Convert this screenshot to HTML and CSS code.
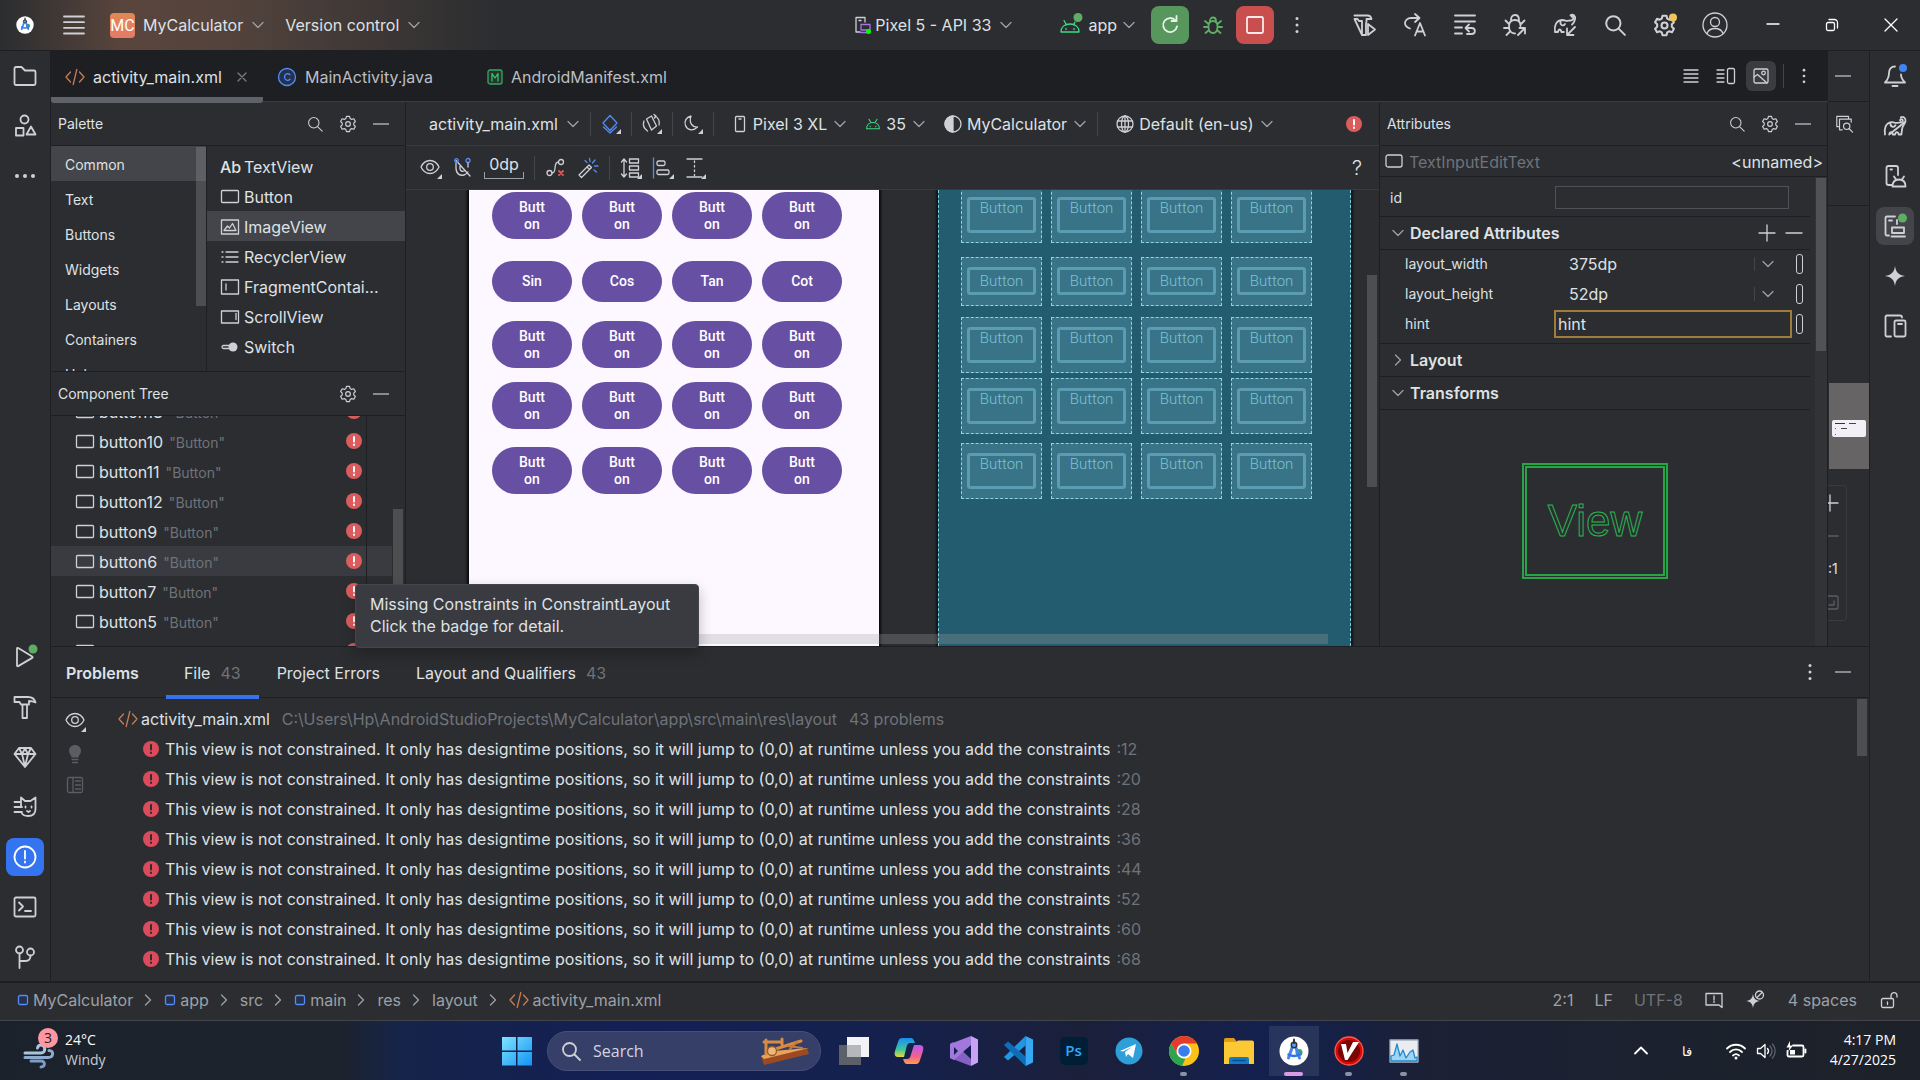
FILE: index.html
```html
<!DOCTYPE html>
<html lang="en">
<head>
<meta charset="utf-8">
<title>MyCalculator – activity_main.xml</title>
<link rel="stylesheet" href="styles.css">
</head>
<body>
<svg class="defs" aria-hidden="true">
  <symbol id="chev" viewBox="0 0 14 14"><path d="M2 4.500l5 5 5-5"/></symbol>
  <symbol id="chev-r" viewBox="0 0 14 14"><path d="M4.500 2l5 5-5 5"/></symbol>
  <symbol id="minus" viewBox="0 0 16 16"><path d="M0 8h16" stroke-width="2"/></symbol>
  <symbol id="kebab" viewBox="0 0 20 20"><g fill="currentColor" stroke="none"><circle cx="10" cy="3.500" r="1.500"/><circle cx="10" cy="10" r="1.500"/><circle cx="10" cy="16.500" r="1.500"/></g></symbol>
  <symbol id="search" viewBox="0 0 20 20"><circle cx="8.500" cy="8.500" r="6.500"/><path d="M13.500 13.500L19 19"/></symbol>
  <symbol id="gear" viewBox="0 0 20 20"><path d="M8.300 1.500h3.400l.7 2.500 1.600.9 2.500-.7 1.700 3-1.800 1.800v2l1.800 1.800-1.700 3-2.500-.7-1.600.9-.7 2.500H8.300L7.600 16 6 15.100l-2.500.7-1.700-3L3.600 11V9L1.800 7.200l1.700-3L6 4.900 7.600 4z"/><circle cx="10" cy="10" r="2.600"/></symbol>
  <symbol id="xml" viewBox="0 0 20 20"><g stroke="#c77d55"><path d="M5.500 5L1 10l4.500 5M14.500 5l4.500 5-4.500 5M11.800 2.500l-3.600 15"/></g></symbol>
  <symbol id="err" viewBox="0 0 16 16"><circle cx="8" cy="8" r="8" fill="#db5c5c" stroke="none"/><path d="M8 4v4.500" stroke="#fff" stroke-width="2"/><path d="M8 11.500v.5" stroke="#fff" stroke-width="2"/></symbol>
  <symbol id="err2" viewBox="0 0 16 16"><circle cx="8" cy="8" r="8" fill="#db4b5b" stroke="none"/><path d="M8 4v4.500" stroke="#2b2d30" stroke-width="2"/><path d="M8 11.500v.5" stroke="#2b2d30" stroke-width="2"/></symbol>
  <symbol id="rect" viewBox="0 0 20 16"><rect x="1.500" y="1.500" width="17" height="12" rx="1"/></symbol>
  <symbol id="droid" viewBox="0 0 20 20"><path d="M2 16c0-5 3.500-8 8-8s8 3 8 8zM5 4l2.500 4.500M15 4l-2.500 4.500"/><path d="M6.500 12.500v1M13.500 12.500v1"/></symbol>
  <symbol id="corner" viewBox="0 0 5 5"><path d="M5 0v5H0z" fill="#ced0d6" stroke="none"/></symbol>
  <symbol id="eye" viewBox="0 0 20 20"><path d="M1 10c2-4.300 5.200-6.500 9-6.500s7 2.200 9 6.500c-2 4.300-5.200 6.500-9 6.500S3 14.300 1 10z"/><circle cx="10" cy="10" r="3.300"/></symbol>
  <symbol id="module" viewBox="0 0 12 12"><rect x="1.500" y="1.500" width="9" height="9" rx="1.500" fill="#25324d" stroke="#548af7"/></symbol>
  <symbol id="elephant" viewBox="0 0 24 24"><path d="M2 20.500C1 14.500 2.500 9 8.500 8.200c2-.2 3 .6 4.500.6 2.500 0 5.500.2 6.500-1.300.8-1.400-.2-2.600-1.400-2.400-.9.200-1.200 1-.8 1.700M22.500 7.500c.6-3.500-2.300-5.500-4.700-4.200M22.500 7.500c-1 3.200-2.700 4-3.200 6.500-.4 2.200-.6 4.200-.9 6.500h-2.700c-.3-1.500-.8-2.300-1.800-2.300s-1.500.8-1.800 2.300H9.800c-.3-1.500-.8-2.300-1.800-2.300s-1.500.8-1.800 2.300zM7.500 9c-.5 4 3.500 5 5 2.300M17 12v.3"/></symbol>
  <symbol id="aslogo" viewBox="0 0 30 30"><circle cx="15" cy="15" r="14.500" fill="#fff" stroke="none"/><circle cx="20" cy="16.500" r="3.500" fill="#38a169" stroke="none"/><path d="M14 9L9.500 22M16 9l4.500 13" stroke="#4285f4" stroke-width="3"/><path d="M9.500 18.500c3.500 2 7.500 2 11 0" stroke="#3372e8" stroke-width="2.500"/><circle cx="15" cy="9" r="2.700" fill="#5b9bff" stroke="#333" stroke-width="1.500"/><path d="M15 3.500V7" stroke="#333" stroke-width="2"/></symbol>
</svg>

<header class="titlebar">
  <span class="logo"><svg class="i18"><use href="#aslogo"/></svg></span>
  <button class="slot-menu" aria-label="Main menu"><svg viewBox="0 0 20 20" class="i20 thick"><path d="M0 1.500h20M0 7.200h20M0 12.800h20M0 18.500h20"/></svg></button>
  <button class="combo project"><span class="mc">MC</span><span>MyCalculator</span><svg class="i14"><use href="#chev"/></svg></button>
  <button class="combo vcs">Version control<svg class="i14"><use href="#chev"/></svg></button>
  <div class="run">
    <button class="combo tight"><svg class="i18" viewBox="0 0 18 18"><path d="M6 16H2V1.500h9V6M5 4.500h2"/><path d="M7 8.500h9V14H7zM6 16.500h8" stroke="#a571e6"/><circle cx="14.500" cy="15.500" r="2.500" fill="#0f0" stroke="none"/></svg><span>Pixel 5 - API 33</span><svg class="i14 gap5"><use href="#chev"/></svg></button>
    <button class="combo app"><svg class="i24" viewBox="0 0 24 24"><g stroke="#3ddc84" transform="translate(0 4)"><path d="M2 15c0-5 3.500-8 9-8s9 3 9 8zM5 3.500L7.500 8M16 5l-1.500 3M7 11.500v1M15 11.500v1"/></g><circle cx="19" cy="4.500" r="4.500" fill="#5fad65" stroke="none"/></svg><span>app</span><svg class="i14"><use href="#chev"/></svg></button>
    <button class="act green" aria-label="Rerun"><svg class="i20 thick" viewBox="0 0 20 20"><path d="M15.500 5.500A7 7 0 1 0 17 11.500M16.500 1v5h-5" stroke="#e8f3e8"/></svg></button>
    <button class="act bug" aria-label="Debug"><svg class="i20 thick" viewBox="0 0 20 20"><g stroke="#5fad65"><path d="M10 6c3 0 4.500 2 4.500 5.500S13 18 10 18s-4.500-3-4.500-6.500S7 6 10 6zM7 6c0-2.500 1.300-3.500 3-3.500S13 3.500 13 6M5.500 9L2 6M14.500 9L18 6M5.500 12H1M14.500 12H19M6 15l-3.500 3M14 15l3.500 3"/></g></svg></button>
    <button class="act red" aria-label="Stop"><svg class="i20 thick" viewBox="0 0 20 20"><rect x="2" y="2" width="16" height="16" rx="1.500" stroke="#fbeaea"/></svg></button>
    <button class="act kb" aria-label="More"><svg class="i20"><use href="#kebab"/></svg></button>
  </div>
  <nav class="tools">
    <button aria-label="Build"><svg class="i24 thick" viewBox="0 0 24 24"><path d="M1.500 2.500h13c2 0 3.500 1 4 3.500h-5v3M9 22H13V10M9 22V8H6L4.500 6h-3zM15 11l7 5.500-7 5.500z"/></svg></button>
    <button aria-label="Apply changes"><svg class="i24 thick" viewBox="0 0 24 24"><path d="M7 15.500C4 14.500 2 12.500 2 10s2.500-5 6-5h8M12 1l4.500 4L12 9M12 22.500L17 10l5 12.500M13.500 18.500h7"/></svg></button>
    <button aria-label="Apply code"><svg class="i24 thick" viewBox="0 0 24 24"><path d="M2 2.500h20M2 8.500h20M2 14.500h7M2 20.500h7M13 15h5.500c4.500 0 4.500 6 0 6H14M16 11.500L12.500 15l3.500 3.500"/></svg></button>
    <button aria-label="Attach debugger"><svg class="i24 thick" viewBox="0 0 24 24"><path d="M12 20.500c-4 0-6-3-6-7 0-4 2-6.500 6-6.500s5.500 2.500 5.500 6M8 7c0-3 1.500-5 4-5s4 2 4 5M6 11L2.500 7.500M6 15H1M7 18.500L3.500 22M18 11l3.500-3.500M15 22l7-7M16.500 15H22v5.500"/></svg></button>
    <button aria-label="Sync Gradle"><svg class="i24 thick" viewBox="0 0 24 24"><path d="M2 19c-1-6 1-11.500 7-12 3 0 4 1 5.500.8 1.500-.2 4.500.2 5.500-1.500.8-1.500-.2-3-1.500-2.800M22 6.500C23 3 20 .8 17.500 2.300M22 6.500c-.8 3-2 4-3 5M2 19h3c.3-1.500.7-2.500 1.700-2.500S8.100 17.500 8.400 19h2.500M7.500 9c-.5 3.500 3 4.500 4.500 2M22 14l-7.500 7.500M14 15.500V22h6.500"/></svg></button>
    <button aria-label="Search"><svg class="i22 thick"><use href="#search"/></svg></button>
    <button aria-label="Settings"><svg class="i24 thick" viewBox="0 0 24 24"><use href="#gear" x="0" y="1" width="23" height="23"/><circle cx="20" cy="4.500" r="4" fill="#f2c55c" stroke="none"/></svg></button>
    <button aria-label="Account"><svg class="i26" viewBox="0 0 26 26"><circle cx="13" cy="13" r="12"/><circle cx="13" cy="10" r="4.500"/><path d="M5 21.500c1.500-4 5-5 8-5s6.500 1 8 5"/></svg></button>
  </nav>
  <div class="win">
    <button aria-label="Minimize"><svg class="i14 white" viewBox="0 0 14 14"><path d="M1 6h12"/></svg></button>
    <button aria-label="Restore"><svg class="i14 white" viewBox="0 0 14 14"><rect x="1.500" y="4.500" width="8" height="8" rx="1.500"/><path d="M4 1.500h5.500a3 3 0 0 1 3 3V10"/></svg></button>
    <button aria-label="Close"><svg class="i14 white" viewBox="0 0 14 14"><path d="M1 1l12 12M13 1L1 13"/></svg></button>
  </div>
</header>

<div class="workbench">
  <nav class="strip left">
    <button aria-label="Project"><svg class="i24 thick" viewBox="0 0 24 24"><path d="M1.500 19V4.500c0-1 .5-1.500 1.500-1.500h5.500l3.500 3.500h9c1 0 1.500.5 1.500 1.500v11.500c0 1-.5 1.500-1.500 1.500H3c-1 0-1.500-.5-1.500-1.500z"/></svg></button>
    <button aria-label="Resource Manager"><svg class="i24 thick" viewBox="0 0 24 24"><circle cx="11.500" cy="5.500" r="4"/><rect x="3" y="14" width="7.500" height="7.500"/><path d="M18 12.500l4.500 8h-9z"/></svg></button>
    <button aria-label="More tool windows"><svg class="i24" viewBox="0 0 24 24"><g fill="#ced0d6" stroke="none"><circle cx="4" cy="12" r="2"/><circle cx="12" cy="12" r="2"/><circle cx="20" cy="12" r="2"/></g></svg></button>
    <span class="push"></span>
    <button aria-label="Run"><svg class="i24 thick" viewBox="0 0 24 24"><path d="M4 3.500v17c0 .8.6 1 1.200.6l14-8.200c.6-.4.600-1 0-1.400L5.200 3C4.600 2.600 4 2.800 4 3.500z"/><circle cx="20" cy="4" r="4.500" fill="#5fad65" stroke="none"/></svg></button>
    <button aria-label="Build"><svg class="i24 thick" viewBox="0 0 24 24"><path d="M1.500 2H15c3.500 0 6.500 1.500 7.500 5.500-2-1-4-1.500-6.500-1.500v3.500H8L6.500 7h-5zM9.500 9.500V23h4.500V9.500"/></svg></button>
    <button aria-label="App Quality Insights"><svg class="i24 thick" viewBox="0 0 24 24"><path d="M6 3h12l4.500 6L12 22 1.500 9zM1.500 9h21M6 3l3 6 3 12.500L15 9l3-6M9 9l3-5.500L15 9"/></svg></button>
    <button aria-label="Logcat"><svg class="i24 thick" viewBox="0 0 24 24"><path d="M8 12V2.500L12 6h5.500L22.500 2.500V14c0 4-2.500 7-7.500 7s-6-2-6.500-3.500M1.500 7H8M1.500 12H9M1.500 17H9M12.500 11.500v1M18.500 11.500v1M14 16l1.500 1 1.500-1"/></svg></button>
    <button class="on blue" aria-label="Problems"><svg class="i24 thick white" viewBox="0 0 24 24"><circle cx="12" cy="12" r="10.500"/><path d="M12 6v7.500M12 16.500v1"/></svg></button>
    <button aria-label="Terminal"><svg class="i24 thick" viewBox="0 0 24 24"><rect x="1.500" y="2.500" width="21" height="19" rx="1.500"/><path d="M6 7.500l4 4-4 4M12 16h6"/></svg></button>
    <button aria-label="Version Control"><svg class="i24 thick" viewBox="0 0 24 24"><circle cx="6.500" cy="5" r="3.500"/><circle cx="17.500" cy="7" r="3.500"/><path d="M6.500 8.500V23M17.500 10.500c0 4-2 5.500-5 5.500h-6"/></svg></button>
  </nav>

  <div class="center">
    <div class="upper">
      <main class="editor">
        <div class="tabs">
          <a class="tab on" href="#"><svg class="i20"><use href="#xml"/></svg>activity_main.xml<svg class="i10" viewBox="0 0 10 10"><path d="M1 1l8 8M9 1L1 9" stroke="#7a7c82"/></svg></a>
          <a class="tab" href="#"><svg class="i20" viewBox="0 0 20 20"><circle cx="10" cy="10" r="8.500" fill="#25324d" stroke="#548af7"/><path d="M13 7.700c-2-2.200-5.500-1-5.500 2.300s3.500 4.500 5.500 2.300" stroke="#548af7"/></svg>MainActivity.java</a>
          <a class="tab third" href="#"><svg class="i16" viewBox="0 0 16 16"><rect x="1" y="1" width="14" height="14" rx="2" fill="#253627" stroke="#35a86b"/><path d="M5 12V4.500l3 4.500 3-4.500V12" stroke="#35c27a"/></svg>AndroidManifest.xml</a>
          <div class="views">
            <button aria-label="Code"><svg class="i16" viewBox="0 0 16 16"><path d="M1 2h14M1 6h14M1 10h14M1 14h14"/></svg></button>
            <button aria-label="Split"><svg class="i20" viewBox="0 0 20 20"><path d="M1 4h7M1 8h7M1 12h7M1 16h7"/><rect x="11.500" y="2.500" width="7" height="15" rx="1.500"/></svg></button>
            <button class="sel" aria-label="Design"><svg class="i16" viewBox="0 0 16 16"><rect x="1" y="1" width="14" height="14" rx="1.500"/><circle cx="10.500" cy="5" r="1.800"/><path d="M1 9l3.500-2.500 9.500 8.500"/></svg></button>
            <i class="sep"></i>
            <button aria-label="More"><svg class="i18"><use href="#kebab"/></svg></button>
          </div>
        </div>

        <div class="design">
          <aside class="side">
            <section class="palette">
              <h2 class="head">Palette<span class="acts"><button aria-label="Search"><svg class="i16"><use href="#search"/></svg></button><button aria-label="Settings"><svg class="i18"><use href="#gear"/></svg></button><button aria-label="Hide"><svg class="i16 dim"><use href="#minus"/></svg></button></span></h2>
              <div class="pal-body">
                <ul class="cats">
                  <li class="sel">Common</li><li>Text</li><li>Buttons</li><li>Widgets</li><li>Layouts</li><li>Containers</li><li>Helpers</li>
                </ul>
                <i class="thumb cats-thumb"></i>
                <ul class="items">
                  <li><b>Ab</b>TextView</li>
                  <li><svg class="rc"><use href="#rect"/></svg>Button</li>
                  <li class="sel"><svg class="rc" viewBox="0 0 20 16"><rect x="1.500" y="1" width="17" height="14"/><path d="M4 11.500L7.500 7l2 2 3-4.500 3.500 7z"/></svg>ImageView</li>
                  <li><svg class="rc" viewBox="0 0 20 16"><path d="M6 3h12M6 8h12M6 13h12M2 3h1M2 8h1M2 13h1"/></svg>RecyclerView</li>
                  <li><svg class="rc" viewBox="0 0 20 16"><rect x="1.500" y="1" width="17" height="14"/><path d="M6 5v6"/></svg>FragmentContai...</li>
                  <li><svg class="rc" viewBox="0 0 20 16"><rect x="1.500" y="2" width="17" height="12"/><path d="M16 4.500v6"/></svg>ScrollView</li>
                  <li><svg class="rc" viewBox="0 0 20 16"><rect x="2" y="6.500" width="12" height="3" rx="1.500"/><circle cx="13" cy="8" r="4.500" fill="#ced0d6" stroke="none"/></svg>Switch</li>
                </ul>
              </div>
            </section>
            <section class="ctree">
              <h2 class="head">Component Tree<span class="acts"><button aria-label="Settings"><svg class="i18"><use href="#gear"/></svg></button><button aria-label="Hide"><svg class="i16 dim"><use href="#minus"/></svg></button></span></h2>
              <div class="ct-body">
                <ul class="ct-list">
                  <li><svg class="rc"><use href="#rect"/></svg>button18<small>"Button"</small><svg class="i16 badge"><use href="#err"/></svg></li>
                  <li><svg class="rc"><use href="#rect"/></svg>button10<small>"Button"</small><svg class="i16 badge"><use href="#err"/></svg></li>
                  <li><svg class="rc"><use href="#rect"/></svg>button11<small>"Button"</small><svg class="i16 badge"><use href="#err"/></svg></li>
                  <li><svg class="rc"><use href="#rect"/></svg>button12<small>"Button"</small><svg class="i16 badge"><use href="#err"/></svg></li>
                  <li><svg class="rc"><use href="#rect"/></svg>button9<small>"Button"</small><svg class="i16 badge"><use href="#err"/></svg></li>
                  <li class="sel"><svg class="rc"><use href="#rect"/></svg>button6<small>"Button"</small><svg class="i16 badge"><use href="#err"/></svg></li>
                  <li><svg class="rc"><use href="#rect"/></svg>button7<small>"Button"</small><svg class="i16 badge"><use href="#err"/></svg></li>
                  <li><svg class="rc"><use href="#rect"/></svg>button5<small>"Button"</small><svg class="i16 badge"><use href="#err"/></svg></li>
                  <li><svg class="rc"><use href="#rect"/></svg>button8<small>"Button"</small><svg class="i16 badge"><use href="#err"/></svg></li>
                </ul>
                <i class="thumb ct-thumb"></i>
              </div>
              <div class="tooltip" role="tooltip">Missing Constraints in ConstraintLayout<br>Click the badge for detail.</div>
            </section>
          </aside>

          <section class="canvas">
            <div class="bar one">
              <button class="combo">activity_main.xml<svg class="i14"><use href="#chev"/></svg></button>
              <i class="sep"></i>
              <button class="ic" aria-label="Surface"><svg class="i20" viewBox="0 0 20 20"><path d="M9 1.500L16 9l-7 7.500L2 9zM2.500 13L9 19l6.500-6" stroke="#548af7"/><use href="#corner" x="15" y="15" width="5" height="5"/></svg></button>
              <i class="sep"></i>
              <button class="ic" aria-label="Orientation"><svg class="i20" viewBox="0 0 20 20"><path d="M4.500 5l5-3 5 10-5 4zM2 7C.5 11 2 14.500 5.500 17M13 2c3.500 1.500 5 5.500 4 9M12 .5l2 1.500-1.500 2"/><use href="#corner" x="15" y="15" width="5" height="5"/></svg></button>
              <i class="sep"></i>
              <button class="ic" aria-label="Night mode"><svg class="i20" viewBox="0 0 20 20"><path d="M8 2C3 3 1 7.500 2.500 11.500S9.500 18 14.500 13C10 13.500 5.500 9.500 8 2z"/><use href="#corner" x="15" y="15" width="5" height="5"/></svg></button>
              <i class="sep"></i>
              <button class="combo pad"><svg class="i16" viewBox="0 0 16 16"><rect x="3.500" y=".5" width="9" height="15" rx="1"/><path d="M7 3h2"/></svg>Pixel 3 XL<svg class="i14"><use href="#chev"/></svg></button>
              <button class="combo pad"><svg class="i16 lime"><use href="#droid"/></svg>35<svg class="i14"><use href="#chev"/></svg></button>
              <button class="combo pad"><svg class="i18" viewBox="0 0 18 18"><circle cx="9" cy="9" r="8"/><path d="M9 1a8 8 0 0 0 0 16z" fill="#ced0d6"/></svg>MyCalculator<svg class="i14"><use href="#chev"/></svg></button>
              <i class="sep"></i>
              <button class="combo pad"><svg class="i18" viewBox="0 0 18 18"><circle cx="9" cy="9" r="8"/><ellipse cx="9" cy="9" rx="3.500" ry="8"/><path d="M9 1v16M1.500 6h15M1.500 12h15"/></svg>Default (en-us)<svg class="i14"><use href="#chev"/></svg></button>
              <button class="end" aria-label="Errors"><svg class="i16"><use href="#err"/></svg></button>
            </div>
            <div class="bar two">
              <button class="ic" aria-label="View options"><svg class="i22" viewBox="0 0 22 22"><use href="#eye" width="20" height="20"/><use href="#corner" x="17" y="17" width="5" height="5"/></svg></button>
              <button class="ic" aria-label="Autoconnect"><svg class="i22" viewBox="0 0 22 22"><path d="M4 6v5c0 6 4 8 8 7 2-.5 3-1.500 4-3M8 9.500v2c0 2 2 3.500 4 2.500M4 3.500L18 19"/><circle cx="4.500" cy="3.500" r="1.800" stroke="#548af7"/><circle cx="16" cy="3.500" r="2" stroke="#548af7"/><path d="M16 6v4"/></svg></button>
              <button class="dp">0dp</button>
              <i class="sep"></i>
              <button class="ic" aria-label="Clear constraints"><svg class="i22" viewBox="0 0 22 22"><circle cx="16" cy="5" r="2.500"/><circle cx="4.500" cy="16" r="2.500"/><path d="M13.500 5c-6 0-1 11-6.500 11"/><path d="M14 14l4 4M18 14l-4 4" stroke="#db5c5c" stroke-width="1.800"/></svg></button>
              <button class="ic" aria-label="Infer constraints"><svg class="i22" viewBox="0 0 22 22"><path d="M2 18L12 8l2.500 2.500L4.500 20.500zM10 10l2.500 2.500"/><path d="M12.500 1.500l.5 3M18 3l-2.500 3M21 9h-3.500M19.500 15l-2.500-2M8 3.500l2 2" stroke="#548af7"/></svg></button>
              <i class="sep"></i>
              <button class="ic" aria-label="Pack"><svg class="i22" viewBox="0 0 22 22"><path d="M4 2v18M1.500 5L4 2l2.500 3M1.500 17L4 20l2.500-3"/><rect x="9.500" y="2" width="9" height="4"/><rect x="9.500" y="9" width="9" height="4"/><rect x="9.500" y="16" width="9" height="4"/><use href="#corner" x="17" y="17" width="5" height="5"/></svg></button>
              <button class="ic" aria-label="Align"><svg class="i22" viewBox="0 0 22 22"><path d="M1.500 1v20" stroke="#548af7"/><rect x="5" y="4" width="8" height="4.500" rx="1.500"/><rect x="5" y="13" width="12" height="4.500" rx="1.500"/><use href="#corner" x="17" y="17" width="5" height="5"/></svg></button>
              <button class="ic" aria-label="Guidelines"><svg class="i22" viewBox="0 0 22 22"><path d="M3 2h15M3 20h15"/><path d="M10.500 4v15" stroke-dasharray="1.500 3"/><use href="#corner" x="17" y="17" width="5" height="5"/></svg></button>
              <button class="end help">?</button>
            </div>
            <div class="surface">
              <div class="phone">
                <div class="prow r1"><button>Butt<br>on</button><button>Butt<br>on</button><button>Butt<br>on</button><button>Butt<br>on</button></div>
                <div class="prow r2"><button>Sin</button><button>Cos</button><button>Tan</button><button>Cot</button></div>
                <div class="prow r3"><button>Butt<br>on</button><button>Butt<br>on</button><button>Butt<br>on</button><button>Butt<br>on</button></div>
                <div class="prow r4"><button>Butt<br>on</button><button>Butt<br>on</button><button>Butt<br>on</button><button>Butt<br>on</button></div>
                <div class="prow r5"><button>Butt<br>on</button><button>Butt<br>on</button><button>Butt<br>on</button><button>Butt<br>on</button></div>
              </div>
              <div class="blueprint">
                <div class="brow b1"><div><span>Button</span></div><div><span>Button</span></div><div><span>Button</span></div><div><span>Button</span></div></div>
                <div class="brow b2"><div><span>Button</span></div><div><span>Button</span></div><div><span>Button</span></div><div><span>Button</span></div></div>
                <div class="brow b3"><div><span>Button</span></div><div><span>Button</span></div><div><span>Button</span></div><div><span>Button</span></div></div>
                <div class="brow b4"><div><span>Button</span></div><div><span>Button</span></div><div><span>Button</span></div><div><span>Button</span></div></div>
                <div class="brow b5"><div><span>Button</span></div><div><span>Button</span></div><div><span>Button</span></div><div><span>Button</span></div></div>
              </div>
              <i class="thumb sv"></i><i class="thumb sh"></i>
            </div>
          </section>

          <aside class="attrs">
            <h2 class="head">Attributes<span class="acts"><button aria-label="Search"><svg class="i16"><use href="#search"/></svg></button><button aria-label="Settings"><svg class="i18"><use href="#gear"/></svg></button><button aria-label="Hide"><svg class="i16 dim"><use href="#minus"/></svg></button></span></h2>
            <div class="kind"><svg class="i18" viewBox="0 0 18 18"><rect x="1" y="2" width="16" height="12" rx="2"/></svg><span>TextInputEditText</span><em>&lt;unnamed&gt;</em></div>
            <div class="at-body">
              <div class="at-main">
                <div class="arow idrow"><label for="a-id">id</label><input id="a-id" class="idbox" type="text"></div>
                <h3 class="ahead"><svg class="i14"><use href="#chev"/></svg>Declared Attributes<span class="pm"><button aria-label="Add"><svg class="i16" viewBox="0 0 16 16"><path d="M8 0v16M0 8h16"/></svg></button><button aria-label="Remove"><svg class="i16" viewBox="0 0 16 16"><path d="M0 8h16"/></svg></button></span></h3>
                <div class="decl">
                  <div class="arow"><label for="a-w">layout_width</label><span class="cb"><select id="a-w"><option>375dp</option></select><i class="sep"></i><svg class="i14"><use href="#chev"/></svg></span><i class="pill"></i></div>
                  <div class="arow"><label for="a-h">layout_height</label><span class="cb"><select id="a-h"><option>52dp</option></select><i class="sep"></i><svg class="i14"><use href="#chev"/></svg></span><i class="pill"></i></div>
                  <div class="arow"><label for="a-hint">hint</label><input id="a-hint" class="hint" type="text" value="hint"><i class="pill"></i></div>
                </div>
                <h3 class="ahead"><svg class="i14"><use href="#chev-r"/></svg>Layout</h3>
                <h3 class="ahead"><svg class="i14"><use href="#chev"/></svg>Transforms</h3>
                <div class="viewbox"><span>View</span></div>
              </div>
              <div class="track"><i class="thumb"></i></div>
            </div>
          </aside>
        </div>
      </main>

      <aside class="sliver">
        <div class="s-top"><svg class="i16 dim"><use href="#minus"/></svg></div>
        <div class="s-tool"><svg class="i18" viewBox="0 0 20 20"><path d="M4 13H2V1.500h13V4M8 16.500H5V4.500h13V8"/><circle cx="13" cy="12.500" r="3.500"/><path d="M15.500 15l4 4"/></svg></div>
        <div class="s-prev"><span></span></div>
        <div class="s-zoom"><svg class="i20" viewBox="0 0 20 20"><path d="M0 10h10M2 2v16"/></svg><svg class="i20" viewBox="0 0 20 20"><path d="M0 10h10" stroke="#5a5d63"/></svg><span>:1</span><svg class="i20" viewBox="0 0 20 20"><path d="M0 4h8c1.500 0 2 .5 2 2v9c0 1-.5 2-2 2H0M6 9v4H1" stroke="#5a5d63"/></svg></div>
      </aside>
    </div>

    <section class="problems">
      <div class="ptabs">
        <h2>Problems</h2>
        <a class="on" href="#">File<span>43</span></a>
        <a href="#">Project Errors</a>
        <a href="#">Layout and Qualifiers<span>43</span></a>
        <span class="pact"><button aria-label="More"><svg class="i20"><use href="#kebab"/></svg></button><button aria-label="Hide"><svg class="i16 dim"><use href="#minus"/></svg></button></span>
      </div>
      <div class="pbody">
        <div class="ptools">
          <button aria-label="View options"><svg class="i22" viewBox="0 0 22 22"><use href="#eye" width="20" height="20" x="1"/><use href="#corner" x="17" y="17" width="5" height="5"/></svg></button>
          <button aria-label="Quick fix"><svg class="i20" viewBox="0 0 20 20"><path d="M10 1c3.500 0 6 2.500 6 6 0 3-2.500 4-2.500 6.500h-7C6.500 11 4 10 4 7c0-3.500 2.500-6 6-6z" fill="#5a5d63" stroke="none"/><path d="M7 15.500h6M7.500 18.500h5" stroke="#5a5d63"/></svg></button>
          <button aria-label="Preview"><svg class="i18" viewBox="0 0 18 18"><g stroke="#5a5d63"><rect x="1.500" y="1.500" width="15" height="15" rx="1.500"/><path d="M7 1.500v15M9.500 5h5M9.500 9h5M9.500 13h5"/></g></svg></button>
        </div>
        <ul class="plist">
          <li class="file"><svg class="i20"><use href="#xml"/></svg>activity_main.xml<span class="path">C:\Users\Hp\AndroidStudioProjects\MyCalculator\app\src\main\res\layout</span><span class="path">43 problems</span></li>
          <li><svg class="i16"><use href="#err2"/></svg>This view is not constrained. It only has designtime positions, so it will jump to (0,0) at runtime unless you add the constraints<span>:12</span></li>
          <li><svg class="i16"><use href="#err2"/></svg>This view is not constrained. It only has designtime positions, so it will jump to (0,0) at runtime unless you add the constraints<span>:20</span></li>
          <li><svg class="i16"><use href="#err2"/></svg>This view is not constrained. It only has designtime positions, so it will jump to (0,0) at runtime unless you add the constraints<span>:28</span></li>
          <li><svg class="i16"><use href="#err2"/></svg>This view is not constrained. It only has designtime positions, so it will jump to (0,0) at runtime unless you add the constraints<span>:36</span></li>
          <li><svg class="i16"><use href="#err2"/></svg>This view is not constrained. It only has designtime positions, so it will jump to (0,0) at runtime unless you add the constraints<span>:44</span></li>
          <li><svg class="i16"><use href="#err2"/></svg>This view is not constrained. It only has designtime positions, so it will jump to (0,0) at runtime unless you add the constraints<span>:52</span></li>
          <li><svg class="i16"><use href="#err2"/></svg>This view is not constrained. It only has designtime positions, so it will jump to (0,0) at runtime unless you add the constraints<span>:60</span></li>
          <li><svg class="i16"><use href="#err2"/></svg>This view is not constrained. It only has designtime positions, so it will jump to (0,0) at runtime unless you add the constraints<span>:68</span></li>
        </ul>
        <i class="thumb pthumb"></i>
      </div>
    </section>
  </div>

  <nav class="strip right">
    <button aria-label="Notifications"><svg class="i24 thick" viewBox="0 0 24 24"><path d="M12 2.500c-4 0-6 2.500-6 6.500 0 5-1.500 7-4 9.500h20c-2.500-2.500-4-4.500-4-8M9.500 22h5"/><circle cx="20" cy="4" r="4" fill="#3f83f8" stroke="none"/></svg></button>
    <button aria-label="Gradle"><svg class="i24 thick"><use href="#elephant"/></svg></button>
    <button aria-label="Device Manager"><svg class="i24 thick" viewBox="0 0 24 24"><path d="M9 21H5.500c-1.500 0-2-.5-2-2V4c0-1.500.5-2 2-2H13c1.500 0 2 .5 2 2v7M7.500 5.500H9M9.500 22.500c0-4.500 2.500-7 6.500-7s6.500 2.500 6.500 7zM11 12.500l2 3M21 12.500l-2 3"/></svg></button>
    <button class="on" aria-label="Running Devices"><svg class="i24 thick" viewBox="0 0 24 24"><path d="M6 21.500H4c-1 0-1.500-.5-1.500-1.500V4c0-1 .5-1.500 1.500-1.500h8M6 6.500h3M9 13.500h12v5.500H9zM8.500 22.500H22M14 6v4"/><circle cx="19.500" cy="4" r="4.500" fill="#5fad65" stroke="none"/></svg></button>
    <button aria-label="Gemini"><svg class="i24" viewBox="0 0 24 24"><path d="M12 2c1 6.500 3.500 9 10 10-6.500 1-9 3.500-10 10-1-6.500-3.500-9-10-10 6.500-1 9-3.500 10-10z" fill="#ced0d6" stroke="none"/></svg></button>
    <button aria-label="Device Explorer"><svg class="i24 thick" viewBox="0 0 24 24"><path d="M8 22.500H4c-1 0-1.500-.5-1.500-1.500V3c0-1 .5-1.500 1.500-1.500h13c1.500 0 2 .5 2 2"/><rect x="11.500" y="6.500" width="11" height="16" rx="1.500"/><path d="M15 10h4"/></svg></button>
  </nav>
</div>

<footer class="status">
  <nav class="crumbs">
    <svg class="i12"><use href="#module"/></svg><a href="#">MyCalculator</a><svg class="i14"><use href="#chev-r"/></svg>
    <svg class="i12"><use href="#module"/></svg><a href="#">app</a><svg class="i14"><use href="#chev-r"/></svg>
    <a class="bare" href="#">src</a><svg class="i14"><use href="#chev-r"/></svg>
    <svg class="i12"><use href="#module"/></svg><a href="#">main</a><svg class="i14"><use href="#chev-r"/></svg>
    <a class="bare" href="#">res</a><svg class="i14"><use href="#chev-r"/></svg>
    <a class="bare" href="#">layout</a><svg class="i14"><use href="#chev-r"/></svg>
    <svg class="i20"><use href="#xml"/></svg><a href="#">activity_main.xml</a>
  </nav>
  <div class="info">
    <span>2:1</span><span>LF</span><span class="faint">UTF-8</span>
    <svg class="i20" viewBox="0 0 20 20"><path d="M2 3.500h16v14l-3-2.500H2zM10 6v4M10 11.500v1"/></svg>
    <svg class="i20" viewBox="0 0 20 20"><path d="M8 4c.7 4.500 2.500 6.500 7 7-4.500.7-6.300 2.500-7 7-.7-4.500-2.500-6.300-7-7 4.500-.5 6.300-2.500 7-7z" fill="#ced0d6" stroke="none"/><circle cx="14.500" cy="5" r="4" fill="#2b2d30"/><path d="M12 7.500L17 2.500"/></svg>
    <span class="indent">4 spaces</span>
    <svg class="i18" viewBox="0 0 18 18"><rect x="1.500" y="7.500" width="12" height="9" rx="1.500"/><path d="M11 7.500V5c0-4.500 6-4.500 6 0v1M7.500 11v2.500"/></svg>
  </div>
</footer>

<div class="taskbar">
  <div class="weather">
    <svg class="wx" viewBox="0 0 34 36"><path d="M1 20h16c5 0 5-8 0-8-2 0-3 1-3.500 3" stroke="#a9c3e0" stroke-width="3"/><path d="M1 24.500h23c6 0 6-7 1-7" stroke="#8eabcd" stroke-width="3"/><path d="M7 28h10c5 0 4 6 0 6" stroke="#7d9cc4" stroke-width="3"/></svg>
    <b class="count">3</b>
    <p>24°C<br><span>Windy</span></p>
  </div>
  <div class="dock">
    <button aria-label="Start"><svg class="i30" viewBox="0 0 30 30"><defs><linearGradient id="wg" x2="1" y2="1"><stop stop-color="#7fe3ff"/><stop offset="1" stop-color="#1193f5"/></linearGradient></defs><path d="M0 1h14v13.500H0zM15.500 1H30v13.500H15.500zM0 16h14v13.500H0zM15.500 16H30v13.500H15.500z" fill="url(#wg)" stroke="none"/></svg></button>
    <label class="find"><svg class="i20 thick"><use href="#search"/></svg><input type="text" value="Search" aria-label="Search"><svg class="art" viewBox="0 0 50 28"><path d="M1 19l46-8 2 6-45 11z" fill="#9c4a22" stroke="none"/><path d="M1 19l12-5 36-3-45 11z" fill="#e8a45c" stroke="none"/><path d="M9 14L41 4M4 5h18M6 3v14M22 2v6" stroke="#d98b42" stroke-width="3"/><circle cx="12" cy="14" r="4.500" fill="#f0b878" stroke="#9c5a22"/><path d="M28 9l14 2M30 12l8-8" stroke="#c97a38" stroke-width="2"/></svg></label>
    <button aria-label="Task view"><svg class="i30" viewBox="0 0 30 30"><path d="M0 9h22v20H0z" fill="#5d6068" stroke="none"/><path d="M8 1h22v20H8z" fill="#f2f3f5" stroke="none"/><path d="M8 9h14v12H8z" fill="#b5b7bb" stroke="none"/></svg></button>
    <button aria-label="Copilot"><svg class="i30" viewBox="0 0 30 30"><defs><linearGradient id="c1" x2="0" y2="1"><stop stop-color="#1b8cf0"/><stop offset=".6" stop-color="#3ec6a0"/><stop offset="1" stop-color="#e8d838"/></linearGradient><linearGradient id="c2" x2="0" y2="1"><stop stop-color="#b65cf0"/><stop offset=".6" stop-color="#f0628c"/><stop offset="1" stop-color="#ff9d4d"/></linearGradient></defs><path d="M8 2h9c2 0 3 2 4 5h-5c-2 0-3 2-3.500 4L10 21H5c-4 0-5-2-4-6L4 6c.7-2.500 2-4 4-4z" fill="url(#c1)" stroke="none"/><path d="M22 28h-9c-2 0-3-2-4-5h4c2 0 3-1 3.500-3L20 9h5c4 0 5 2 4 6l-3 9c-.7 2.500-2 4-4 4z" fill="url(#c2)" stroke="none"/></svg></button>
    <button aria-label="Visual Studio"><svg class="i30" viewBox="0 0 30 30"><path d="M1 8l3-2 18 17V30L1 22z" fill="#8661c5" stroke="none"/><path d="M1 8v14l4 2L22 9V0z" fill="#a179dc" stroke="none"/><path d="M5 11v8l4-4zM22 10v10l-7-5z" fill="#14204f" stroke="none"/><path d="M22 0l7 3.500v23L22 30z" fill="#c9a2f5" stroke="none"/></svg></button>
    <button aria-label="Visual Studio Code"><svg class="i30" viewBox="0 0 30 30"><path d="M0 21L21.500 0v9.500L4 24.500z" fill="#2196e3" stroke="none"/><path d="M4 5.500L21.500 20.500V30L0 9z" fill="#0f6db5" stroke="none"/><path d="M21.500 0L29 3.500v23L21.500 30z" fill="#37a8f2" stroke="none"/></svg></button>
    <button aria-label="Photoshop"><span class="ps">Ps</span></button>
    <button aria-label="Telegram"><svg class="i30" viewBox="0 0 30 30"><circle cx="15" cy="15" r="13.500" fill="#2f9fd9" stroke="none"/><path d="M6 15l16-7-3 14-5-4-2 3-1-5 7-5-9 4.500z" fill="#fff" stroke="none"/></svg></button>
    <button class="live" aria-label="Chrome"><svg class="i30" viewBox="0 0 30 30"><circle cx="15" cy="15" r="15" fill="#fbc116" stroke="none"/><path d="M2 7.500A15 15 0 0 1 28 7.500H15l-6.500 11z" fill="#e33b2e" stroke="none"/><path d="M2 7.500l6.500 11.300L15 22.500l1.500 0L13 29.900A15 15 0 0 1 2 7.500z" fill="#2da44e" stroke="none"/><circle cx="15" cy="15" r="7.500" fill="#fff" stroke="none"/><circle cx="15" cy="15" r="5.800" fill="#3b7ded" stroke="none"/></svg></button>
    <button aria-label="File Explorer"><svg class="i30" viewBox="0 0 30 30"><path d="M0 3.500Q0 2 1.500 2H10l3 4H0z" fill="#e39c12" stroke="none"/><path d="M0 6h12l2-1.500h14q2 0 2 2V28H0z" fill="#fcc934" stroke="none"/><path d="M5 28v-5q0-2 2-2h16q2 0 2 2v5z" fill="#1678c8" stroke="none"/><path d="M9 24.500h12" stroke="#0b4f8a"/></svg></button>
    <button class="live cur" aria-label="Android Studio"><svg class="i30"><use href="#aslogo"/></svg></button>
    <button class="live" aria-label="V"><svg class="i30" viewBox="0 0 30 30"><circle cx="15" cy="15" r="14" fill="#d40a0a" stroke="#ff5a4a"/><circle cx="15" cy="15" r="11" fill="#7c0303" stroke="none"/><path d="M7 8h5l1.500 9L19 6h6L13.500 24H11z" fill="#fff" stroke="none"/></svg></button>
    <button class="live" aria-label="Monitor"><svg class="i30" viewBox="0 0 30 30"><rect x="1" y="4" width="28" height="22" fill="#e9edf2" stroke="#a5b0bd"/><path d="M2 25V20l3-1 3-11 3 12 3-6 3 8 4-6 3-2 2 8 2-1v4z" fill="#9fd4f5" stroke="#2288cc"/></svg></button>
  </div>
  <div class="tray">
    <svg class="i14 white thick" viewBox="0 0 14 14"><path d="M1 9.500l6-6 6 6"/></svg>
    <span class="lang" lang="fa">فا</span>
    <svg class="i20 white thick" viewBox="0 0 20 20"><path d="M1 7.500c5-5 13-5 18 0M4 11c3.500-3.500 8.500-3.500 12 0M7 14.500c2-1.800 4-1.800 6 0"/><circle cx="10" cy="17" r="1.500" fill="#fff" stroke="none"/></svg>
    <svg class="i20 white" viewBox="0 0 20 20"><path d="M1.500 7.500v5h3L9 16.500v-13L4.500 7.500zM11.500 7.500c1.300 1.500 1.300 3.500 0 5"/><path d="M14 5c2.500 3 2.500 7 0 10M16.500 3c3.500 4 3.500 10 0 14" stroke="#5d636e"/></svg>
    <svg class="i20 white thick" viewBox="0 0 20 20"><path d="M7 4.500h9c1 0 1.500.5 1.500 1.500v8c0 1-.5 1.500-1.500 1.500H3c-1 0-1.500-.5-1.500-1.500v-4M19.500 8.500v3"/><path d="M4 9h5v4.500H4zM4 0L.5 6.500h3L2 11l5-6.500H4z" fill="#fff" stroke="none"/></svg>
    <p>4:17 PM<br>4/27/2025</p>
  </div>
</div>
</body>
</html>
```
FILE: styles.css
```css
* { box-sizing: border-box; }
body { margin: 0; height: 100vh; display: flex; flex-direction: column; overflow: hidden; background: #2b2d30; color: #dfe1e5; font: 16px/20px Inter, "Noto Sans", sans-serif; }
button { border: 0; padding: 0; background: none; color: inherit; font: inherit; display: flex; align-items: center; justify-content: center; flex: none; }
a { color: inherit; text-decoration: none; }
ul, h2, h3, p { margin: 0; padding: 0; list-style: none; font-weight: 400; font-size: inherit; }
i { font-style: normal; }
svg { flex: none; color: #ced0d6; stroke: currentColor; fill: none; stroke-width: 1.3; stroke-linecap: round; stroke-linejoin: round; overflow: visible; }
.defs { position: absolute; width: 0; height: 0; }
.thick { stroke-width: 1.8; }
.white { color: #fff; }
.lime { color: #3ddc84; }
.dim { color: #868a91; }
.i10 { width: 10px; height: 10px; }
.i12 { width: 12px; height: 12px; }
.i14 { width: 14px; height: 14px; }
.i16 { width: 16px; height: 16px; }
.i18 { width: 18px; height: 18px; }
.i20 { width: 20px; height: 20px; }
.i22 { width: 22px; height: 22px; }
.i24 { width: 24px; height: 24px; }
.i26 { width: 26px; height: 26px; }
.i30 { width: 30px; height: 30px; }
.rc { width: 20px; height: 16px; }
.combo { gap: 8px; white-space: nowrap; }
.combo > .i14 { color: #9da0a8; }
.sep { width: 1px; height: 24px; background: #43454a; flex: none; }
.thumb { background: rgba(162, 162, 162, .286); display: block; width: 10px; }

/* title bar */
.titlebar { flex: none; display: flex; align-items: center; height: 51px; border-bottom: 1px solid #1e1f22; background: linear-gradient(90deg, #2b2d30 0, #5a453c 125px, #53433c 230px, #2b2d30 500px); }
.logo { width: 50px; display: flex; justify-content: center; }
.slot-menu { width: 48px; }
.project { margin-left: 12px; }
.mc { width: 25px; height: 25px; border-radius: 4px; background: linear-gradient(180deg, #e08855, #e57a66); color: #fff; font: 16px/25px "Roboto", sans-serif; }
.vcs { margin-left: 20px; }
.run { margin-left: auto; display: flex; align-items: center; }
.combo.tight { gap: 3px; }
.tight .gap5 { margin-left: 5px; }
.combo.app { margin: 0 15px 0 46px; gap: 5px; }
.act { width: 38px; height: 38px; border-radius: 8px; }
.green { background: #57965c; }
.red { background: #c94f4f; }
.bug { width: 47px; }
.kb { width: 46px; }
.tools { display: flex; margin: 0 3px 0 20px; }
.tools button { width: 50px; height: 50px; }
.win { display: flex; }
.win button { width: 59px; height: 50px; }

/* tool window strips */
.workbench { flex: 1; min-height: 0; display: flex; border-bottom: 2px solid #1e1f22; }
.strip { flex: none; width: 51px; padding: 6px 6px 5px; display: flex; flex-direction: column; gap: 12px; }
.strip button { width: 38px; height: 38px; border-radius: 8px; }
.left { border-right: 1px solid #1e1f22; }
.right { border-left: 1px solid #1e1f22; }
.push { flex: 1; }
.strip .on { background: #43454a; }
.strip .blue { background: #3574f0; }
.center { flex: 1; min-width: 0; display: flex; flex-direction: column; }
.upper { flex: 1; min-height: 0; display: flex; border-bottom: 1px solid #1e1f22; }
.editor { flex: 1; min-width: 0; display: flex; flex-direction: column; }

/* editor tabs */
.tabs { flex: none; display: flex; height: 51px; background: #1e1f22; border-bottom: 1px solid #393b40; color: #bcbec4; }
.tab { display: flex; align-items: center; gap: 8px; width: 212px; padding: 5px 0 6px 14px; margin-bottom: -2px; }
.tab.on { color: #dfe1e5; border-bottom: 6px solid #5f6269; border-radius: 3px; padding-bottom: 0; }
.tab .i10 { margin-left: 7px; }
.tab.third { padding-left: 12px; }
.views { margin-left: auto; display: flex; align-items: center; gap: 5px; padding: 0 9px 0 0; }
.views button { width: 30px; height: 30px; border-radius: 6px; }
.views .sel { background: #3b3c3f; }
.views .sep { margin-left: 2px; }

.design { flex: 1; min-height: 0; display: flex; }
.head { flex: none; display: flex; align-items: center; height: 44px; border-bottom: 1px solid #1e1f22; font-size: 14px; padding: 0 16px 0 7px; }
.acts { margin-left: auto; display: flex; align-items: center; gap: 16px; }

/* palette */
.side { flex: none; width: 355px; border-right: 1px solid #1e1f22; display: flex; flex-direction: column; }
.palette { flex: none; height: 270px; border-bottom: 1px solid #1e1f22; display: flex; flex-direction: column; }
.pal-body { flex: 1; min-height: 0; display: flex; overflow: hidden; position: relative; }
.cats { width: 156px; border-right: 1px solid #1e1f22; font-size: 14px; }
.cats li { height: 35px; line-height: 38px; padding-left: 14px; }
.cats .sel, .items .sel { background: #43454a; }
.cats-thumb { position: absolute; left: 145px; top: 1px; height: 159px; }
.items { flex: 1; padding-top: 5px; }
.items li { height: 30px; display: flex; align-items: center; gap: 4px; padding: 2px 0 0 13px; white-space: nowrap; }
.items b { width: 20px; font-weight: 500; }

/* component tree */
.ctree { flex: 1; min-height: 0; display: flex; flex-direction: column; position: relative; }
.ct-body { flex: 1; min-height: 0; overflow: hidden; position: relative; background: linear-gradient(#1e1f22, #1e1f22) 315px 0 / 1px 100% no-repeat; }
.ct-list { margin-top: -20px; padding-right: 13px; }
.ct-list li { height: 30px; display: flex; align-items: center; padding: 2px 0 0 24px; }
.ct-list .rc { margin-right: 4px; }
.ct-list small { font-size: 14px; color: #6f737a; margin: 2px 0 0 6px; }
.ct-list .badge { margin: 0 30px 2px auto; }
.ct-list .sel { background: linear-gradient(#1e1f22, #1e1f22) 315px 0 / 1px 100% no-repeat #393b40; }
.ct-thumb { position: absolute; right: 2px; top: 93px; height: 130px; }
.tooltip { position: absolute; z-index: 3; left: 304px; bottom: -2px; width: 344px; padding: 8px 14px 10px; background: #393b40; border: 1px solid #43454a; border-radius: 4px; line-height: 22px; white-space: nowrap; box-shadow: 0 6px 14px rgba(0, 0, 0, .25); }

/* design surface */
.canvas { flex: 1; min-width: 0; display: flex; flex-direction: column; }
.bar { flex: none; display: flex; align-items: center; gap: 10px; height: 44px; border-bottom: 1px solid #393b40; padding-right: 17px; }
.one { padding-left: 23px; }
.two { padding-left: 14px; }
.combo.pad { padding-left: 8px; gap: 5px; }
.pad > .i14 { margin-left: 1px; }
.end { margin-left: auto; }
.help { font-size: 20px; font-weight: 300; }
.dp { width: 40px; height: 22px; padding-bottom: 6px; border-bottom: 1px solid #9da0a8; background: linear-gradient(#9da0a8, #9da0a8) left bottom / 1px 6px no-repeat, linear-gradient(#9da0a8, #9da0a8) right bottom / 1px 6px no-repeat; }
.surface { flex: 1; min-height: 0; display: flex; gap: 59px; padding-left: 63px; overflow: hidden; position: relative; }
.phone { flex: none; width: 410px; background: #fdf7ff; box-shadow: 0 0 2px 2px #0a0a0b; }
.prow { display: flex; gap: 10px; padding-left: 23px; }
.prow button { width: 80px; height: 47px; border-radius: 24px; background: #6750a4; color: #fff; font: 500 14px/17px Roboto, sans-serif; }
.r1 { margin-top: 2px; }
.r2 { margin-top: 22px; }
.prow.r2 button { height: 41px; }
.r3 { margin-top: 19px; }
.r4 { margin-top: 14px; }
.r5 { margin-top: 18px; }
.blueprint { flex: none; width: 413px; background: #235c6e; border: dashed #7fcfe0; border-width: 0 1px; box-shadow: 0 0 2px 2px #121314; }
.brow { display: flex; gap: 9px; padding-left: 22px; }
.brow div { width: 81px; height: 56px; border: 1px dashed #8ad6e6; background: #387387; padding: 9px 5px; }
.brow span { display: block; width: 69px; height: 36px; border: 3px solid #5a9cb1; border-radius: 3px; color: #7bc3d6; font: 300 15px/16px Roboto, sans-serif; text-align: center; }
.b1 { margin-top: -3px; }
.b2 { margin-top: 14px; }
.b3 { margin-top: 11px; }
.b4 { margin-top: 5px; }
.b5 { margin-top: 9px; }
.b2 div { height: 49px; }
.b2 span { height: 28px; line-height: 22px; }
.sv { position: absolute; right: 2px; top: 85px; height: 212px; }
.sh { position: absolute; left: 290px; right: 51px; bottom: 2px; width: auto; height: 10px; }

/* attributes */
.attrs { flex: none; width: 449px; border: solid #1e1f22; border-width: 0 1px; display: flex; flex-direction: column; overflow: hidden; }
.kind { flex: none; display: flex; align-items: center; height: 31px; border-bottom: 1px solid #1e1f22; padding: 2px 4px 0 5px; }
.kind span { margin-left: 6px; color: #6f737a; }
.kind em { margin-left: auto; font-style: normal; }
.at-body { flex: 1; display: flex; }
.at-main { flex: 1; min-width: 0; margin-right: 5px; }
.track { flex: none; width: 12px; background: #323337; }
.track .thumb { margin: 1px; height: 173px; }
.arow { display: flex; align-items: center; height: 30px; }
.arow label { flex: none; width: 174px; padding-left: 25px; font-size: 14px; }
.idrow { height: 40px; padding: 2px 21px 0 0; border-bottom: 1px solid #1e1f22; }
.idrow label { width: 175px; padding-left: 10px; }
.attrs input, .attrs select { flex: 1; min-width: 0; background: none; color: inherit; font: inherit; appearance: none; outline: 0; border: 0; padding: 0; }
.attrs .idbox { height: 23px; border: 1px solid #4e5157; }
.attrs .hint { height: 28px; border: 2px solid #a07c3b; padding-left: 2px; }
.cb { flex: 1; display: flex; align-items: center; gap: 6px; padding: 0 17px 0 15px; }
.cb .i14 { color: #9da0a8; }
.cb .sep { height: 14px; }
.pill { width: 7px; height: 20px; border: 1px solid #ced0d6; border-radius: 3px; margin: 0 7px 0 4px; }
.ahead { display: flex; align-items: center; height: 33px; border-bottom: 1px solid #1e1f22; padding-left: 11px; gap: 5px; font-weight: 600; }
.ahead > .i14 { color: #9da0a8; }
.pm { margin-left: auto; display: flex; gap: 11px; padding-right: 8px; }
.decl { padding-bottom: 4px; margin-top: -1px; border-bottom: 1px solid #1e1f22; }
.viewbox { width: 146px; height: 116px; margin: 53px auto 0; border: 5px double #27a348; display: flex; align-items: center; justify-content: center; }
.viewbox span { font: 44px/50px "Liberation Sans", Arial, sans-serif; color: #2b2d30; -webkit-text-stroke: 1px #2bb350; }

/* second editor split */
.sliver { flex: none; width: 41px; overflow: hidden; display: flex; flex-direction: column; }
.s-top { height: 51px; border-bottom: 1px solid #1e1f22; padding: 17px 7px; }
.s-tool { height: 104px; border-bottom: 1px solid #1e1f22; padding: 13px 7px; }
.s-prev { height: 86px; margin: 177px 0 16px 1px; background: #676466; padding: 37px 3px; }
.s-prev span { display: block; height: 17px; border-radius: 2px; background: linear-gradient(#333, #333) 3px 3px / 10px 1px no-repeat, linear-gradient(#444, #444) 17px 3px / 7px 1px no-repeat, linear-gradient(#444, #444) 9px 8px / 6px 1px no-repeat, linear-gradient(#669, #669) 3px 8px / 1px 1px no-repeat, linear-gradient(#669, #669) 3px 14px / 1px 1px no-repeat, #f2f0f6; }
.s-zoom { width: 19px; height: 136px; border: 1px solid #393b40; border-left: 0; border-radius: 0 4px 4px 0; display: flex; flex-direction: column; gap: 13px; padding-top: 7px; }
.s-zoom span { font-size: 14px; }

/* problems */
.problems { flex: none; height: 334px; display: flex; flex-direction: column; }
.ptabs { flex: none; height: 51px; border-bottom: 1px solid #1e1f22; display: flex; align-items: center; padding-left: 15px; }
.ptabs h2 { font-weight: 600; margin: 2px 27px 0 0; }
.ptabs a { align-self: flex-start; height: 52px; line-height: 52px; padding: 0 18px; border-bottom: 0 solid #3574f0; }
.ptabs .on { border-bottom-width: 4px; }
.ptabs a span { color: #6f737a; margin-left: 10px; }
.pact { margin-left: auto; display: flex; align-items: center; gap: 15px; padding-right: 18px; }
.pbody { flex: 1; min-height: 0; display: flex; overflow: hidden; position: relative; }
.ptools { width: 48px; display: flex; flex-direction: column; align-items: center; gap: 12px; padding-top: 12px; }
.plist { flex: 1; padding-top: 6px; }
.plist li { height: 30px; display: flex; align-items: center; padding-left: 44px; gap: 6px; white-space: nowrap; }
.plist span { color: #6f737a; }
.plist .file { padding-left: 19px; gap: 3px; }
.plist .path { margin-left: 9px; }
.pthumb { position: absolute; right: 2px; top: 1px; height: 57px; }

/* status bar */
.status { flex: none; height: 38px; border-bottom: 1px solid #43454a; display: flex; align-items: center; justify-content: space-between; color: #9da0a8; padding: 0 22px 3px 17px; }
.status .i14 { color: #9da0a8; }
.crumbs, .info { display: flex; align-items: center; }
.crumbs a { margin: 0 8px 0 4px; }
.crumbs .i14 { margin-right: 9px; }
.crumbs .bare { margin-left: 0; }
.info { gap: 21px; }
.indent { margin: 0 2px; }
.faint { color: #6f737a; }

/* taskbar */
.taskbar { flex: none; height: 59px; display: grid; grid-template-columns: 1fr auto 1fr; align-items: center; background: linear-gradient(90deg, #1b222c 0, #1d232d 340px, #15244a 400px, #141f55 650px, #15214c 900px, #1b1f3a 1080px, #13204f 1280px, #1b2036 1420px, #1b222d 1700px, #1d2129 100%); color: #fff; font: 14px/20px "Open Sans", "Noto Sans", sans-serif; }
.weather { display: flex; align-items: center; padding-left: 24px; position: relative; gap: 7px; }
.weather span { color: #c9cbd0; }
.weather p, .tray p { padding-bottom: 2px; }
.wx { width: 34px; height: 36px; }
.count { position: absolute; left: 38px; top: -2px; width: 20px; height: 20px; border-radius: 10px; background: #ff97a3; color: #222; font-weight: 400; text-align: center; }
.dock { display: flex; align-items: center; }
.dock button { width: 55px; height: 50px; position: relative; }
.find { width: 274px; height: 40px; margin: 0 5px 0 3px; border-radius: 20px; background: #353f68; border: 1px solid #47507a; display: flex; align-items: center; padding: 0 10px 0 13px; gap: 12px; }
.find input { flex: 1; min-width: 0; border: 0; background: none; color: #d3d6e0; font: 16px/20px "Open Sans", sans-serif; padding: 0; }
.art { width: 50px; height: 28px; }
.ps { width: 28px; height: 28px; border-radius: 5px; background: #001e36; color: #31a8ff; font: 600 15px/26px "Open Sans", sans-serif; }
.live::after { content: ""; position: absolute; bottom: 0; left: 24px; width: 7px; height: 4px; border-radius: 2px; background: #8d90a3; }
.cur { background: linear-gradient(rgba(255, 255, 255, .09), rgba(255, 255, 255, .09)) center / 50px 50px no-repeat; }
.cur::after { left: 18px; width: 19px; background: #d99ae6; }
.tray { display: flex; align-items: center; justify-content: flex-end; gap: 10px; padding-right: 24px; text-align: right; }
.lang { margin: 0 24px; font-size: 13px; }
.tray p { margin-left: 14px; }
```
